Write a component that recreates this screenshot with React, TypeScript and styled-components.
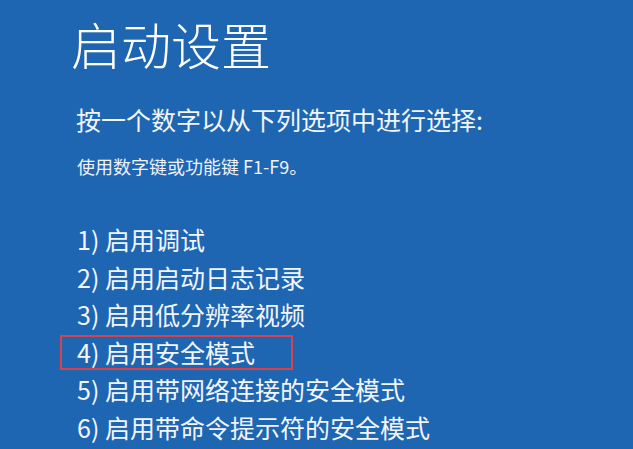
import React from 'react';
import styled, { createGlobalStyle } from 'styled-components';

const GlobalStyles = createGlobalStyle`
    html, body {
        margin     : 0;
        padding    : 0;
        background : #1e65b2;
    }
    body {
        font-family : "Noto Sans CJK SC", "Noto Sans", sans-serif;
        color       : #ffffff;
    }
`

const options: string[] = [
    '启用调试',
    '启用启动日志记录',
    '启用低分辨率视频',
    '启用安全模式',
    '启用带网络连接的安全模式',
    '启用带命令提示符的安全模式',
]

const SELECTED = 3

const App: React.FC = () => {
    return (
        <Screen>
            <GlobalStyles />
            <Title>启动设置</Title>
            <Prompt>按一个数字以从下列选项中进行选择:</Prompt>
            <Hint>使用数字键或功能键 F1-F9。</Hint>
            <OptionList>
                {options.map((label, i) => (
                    <Option key={i} $selected={i === SELECTED}>
                        {i + 1}) {label}
                    </Option>
                ))}
            </OptionList>
        </Screen>
    );
}

export default App;

const Screen = styled.div`
    position   : relative;
    width      : 633px;
    height     : 449px;
    overflow   : hidden;
    background : #1e65b2;
    padding    : 13px 0 0 71px;
    box-sizing : border-box;
`

const Title = styled.h1`
    margin      : 0;
    font-size   : 50px;
    font-weight : 300;
    line-height : 60px;
    color       : #ffffff;
`

const Prompt = styled.div`
    margin-top  : 31px;
    margin-left : 5px;
    font-size   : 25px;
    line-height : 30px;
    color       : #f2f6fb;
`

const Hint = styled.div`
    margin-top  : 20px;
    margin-left : 6px;
    font-size   : 18px;
    line-height : 24px;
    color       : #eef3fa;
`

const OptionList = styled.ul`
    list-style  : none;
    margin      : 43px 0 0;
    padding     : 0;
`

const Option = styled.li<{ $selected?: boolean }>`
    font-size   : 25px;
    line-height : 37.6px;
    margin-left : 6px;
    color       : #f2f6fb;
    position    : relative;

    &::after {
        content       : '';
        display       : ${p => (p.$selected ? 'block' : 'none')};
        position      : absolute;
        left          : -17px;
        top           : 1px;
        width         : 229px;
        height        : 31px;
        border        : 2px solid #d6434d;
    }
`
